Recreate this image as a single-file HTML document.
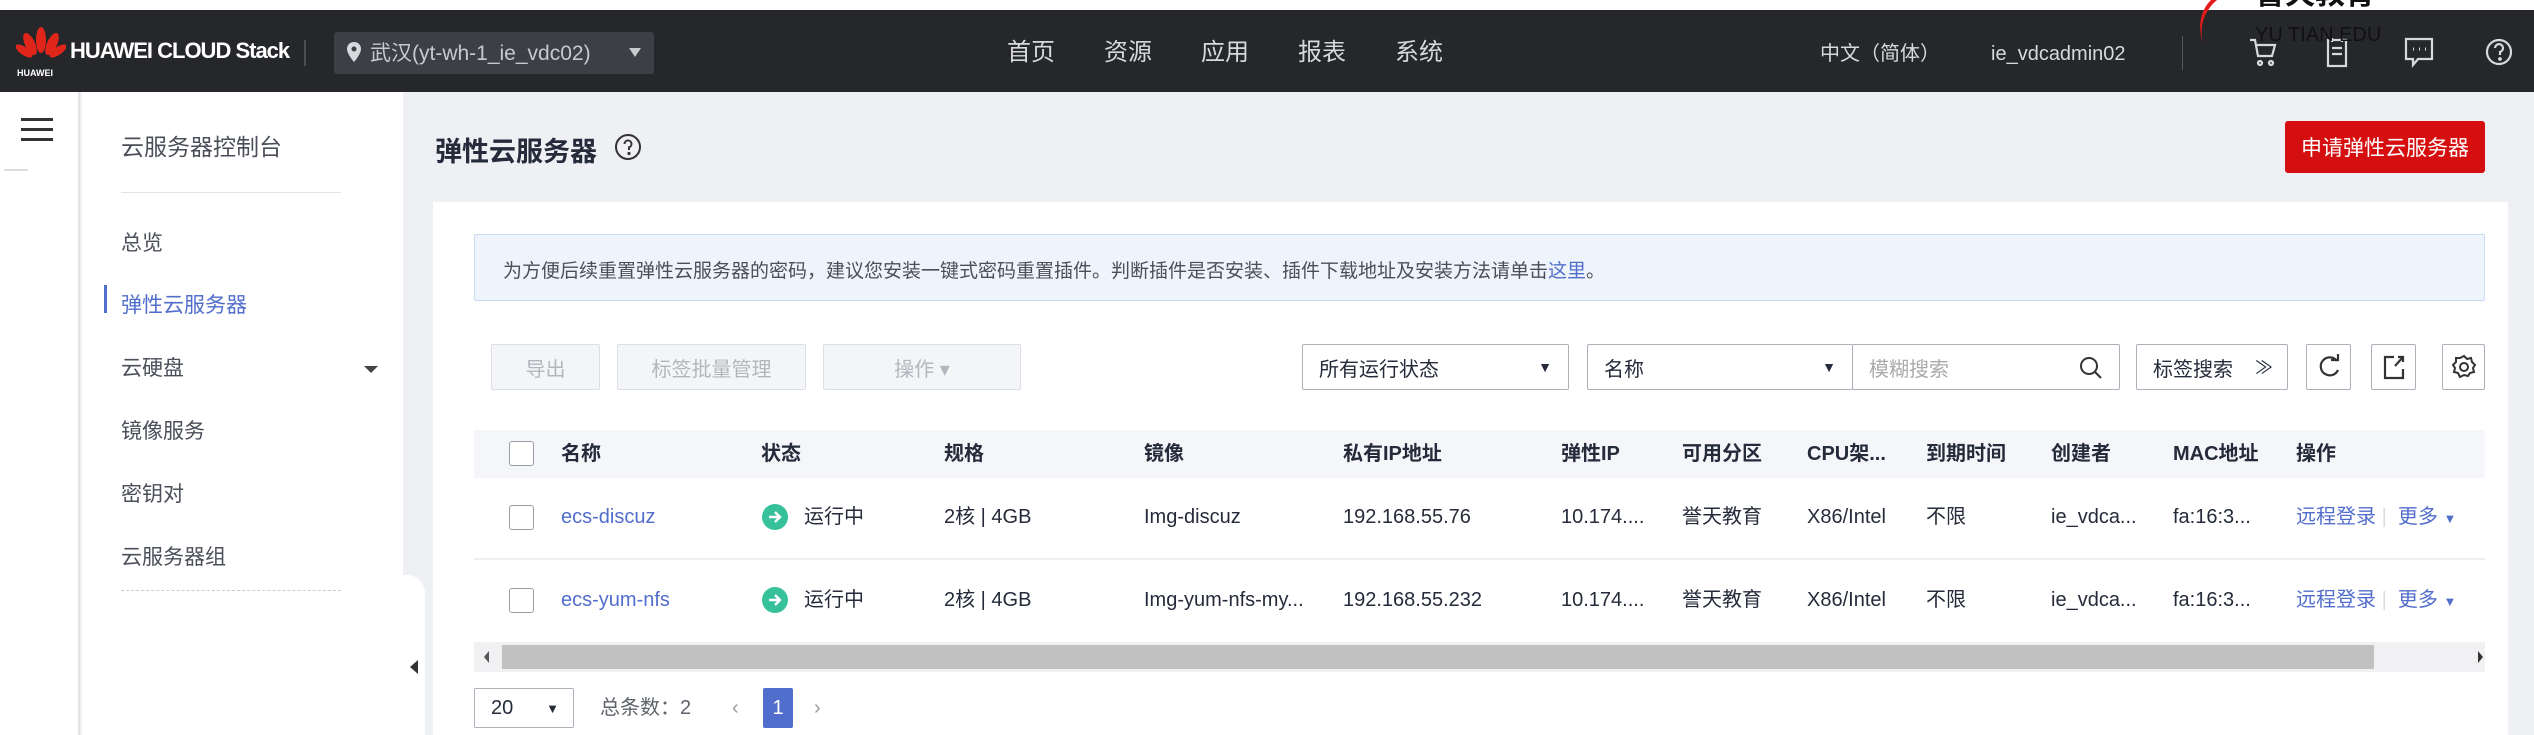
<!DOCTYPE html>
<html><head><meta charset="utf-8"><style>
*{margin:0;padding:0;box-sizing:border-box}
body{width:2534px;height:735px;overflow:hidden;background:#eff0f4;font-family:"Liberation Sans","Noto Sans CJK SC",sans-serif;color:#252b3a;position:relative}
.a{position:absolute;white-space:nowrap}
.hdr{left:0;top:10px;width:2534px;height:82px;background:#25272b}
.nav{color:#d8d9dc;font-size:24px;top:38px;line-height:30px}
.side{left:0;top:92px;width:80px;height:643px;background:#fff;border-right:2px solid #e3e4e8}
.menu{left:82px;top:92px;width:321px;height:643px;background:#fff}
.mi{font-size:21px;color:#4b4f59;left:121px;line-height:28px}
.card{left:433px;top:202px;width:2075px;height:533px;background:#fff}
.btn{border:1px solid #dcdfe6;background:#f4f5f7;color:#b3b6bd;font-size:20px;display:flex;align-items:center;justify-content:center;height:46px;top:344px;border-radius:2px}
.sel{border:1px solid #adb0b8;background:#fff;font-size:20px;color:#252b3a;height:46px;top:344px;display:flex;align-items:center;padding-left:16px;border-radius:2px}
.th{font-size:20px;font-weight:bold;color:#252b3a;top:440px;line-height:28px}
.td{font-size:20px;color:#252b3a;line-height:28px}
.td *{line-height:28px}
.lnk{color:#526ecc}
.cb{width:25px;height:25px;border:1.5px solid #9a9da4;border-radius:3px;background:#fff}
.ic{width:45px;height:46px;border:1px solid #adb0b8;top:344px;background:#fff;display:flex;align-items:center;justify-content:center;border-radius:2px}
</style></head><body>
<div class="a" style="left:0;top:0;width:2534px;height:10px;background:#fff"></div>
<div class="a hdr"></div>
<svg class="a" style="left:16px;top:26px" width="50" height="52" viewBox="0 0 50 52">
<g fill="#e0251b"><ellipse cx="25" cy="14" rx="5" ry="13"/><ellipse cx="14" cy="18" rx="5" ry="12" transform="rotate(-25 14 18)"/><ellipse cx="36" cy="18" rx="5" ry="12" transform="rotate(25 36 18)"/><ellipse cx="8" cy="25" rx="4" ry="10" transform="rotate(-55 8 25)"/><ellipse cx="42" cy="25" rx="4" ry="10" transform="rotate(55 42 25)"/></g>
<text x="1" y="50" fill="#fff" font-size="9" font-family="Liberation Sans" font-weight="bold">HUAWEI</text></svg>
<div class="a" style="left:70px;top:38px;color:#fff;font-size:22px;font-weight:bold;letter-spacing:-1px">HUAWEI CLOUD Stack</div>
<div class="a" style="left:304px;top:40px;width:2px;height:26px;background:#4a4c52"></div>
<div class="a" style="left:334px;top:32px;width:320px;height:42px;background:#3c3f45;border-radius:3px"></div>
<svg class="a" style="left:347px;top:42px" width="14" height="20" viewBox="0 0 14 20"><path d="M7 0C3 0 0 3 0 7c0 5 7 13 7 13s7-8 7-13c0-4-3-7-7-7z" fill="#d8d9dc"/><circle cx="7" cy="7" r="2.5" fill="#3c3f45"/></svg>
<div class="a" style="left:370px;top:40px;color:#c8c9cc;font-size:21px;line-height:28px">武汉(yt-wh-1_ie_vdc02)</div>
<div class="a" style="left:629px;top:48px;width:0;height:0;border-left:6px solid transparent;border-right:6px solid transparent;border-top:9px solid #c8c9cc"></div>
<div class="a nav" style="left:1007px">首页</div>
<div class="a nav" style="left:1104px">资源</div>
<div class="a nav" style="left:1201px">应用</div>
<div class="a nav" style="left:1298px">报表</div>
<div class="a nav" style="left:1395px">系统</div>
<div class="a" style="left:1820px;top:40px;color:#d8d9dc;font-size:20px;line-height:28px">中文（简体）</div>
<div class="a" style="left:1991px;top:40px;color:#d8d9dc;font-size:20px;line-height:28px">ie_vdcadmin02</div>
<div class="a" style="left:2182px;top:36px;width:1px;height:34px;background:#55585e"></div>
<svg class="a" style="left:2248px;top:36px" width="30" height="32" viewBox="0 0 30 32" fill="none" stroke="#d8d9dc" stroke-width="2.2"><path d="M2 4h5l3 16h14l3-11H9"/><circle cx="12" cy="27" r="2"/><circle cx="23" cy="27" r="2"/></svg>
<svg class="a" style="left:2326px;top:36px" width="22" height="32" viewBox="0 0 22 32" fill="none" stroke="#d8d9dc" stroke-width="2.2"><rect x="2" y="4" width="18" height="26"/><path d="M6 12h10M6 18h10M6 2v4M16 2v4"/></svg>
<svg class="a" style="left:2404px;top:36px" width="30" height="32" viewBox="0 0 30 32" fill="none" stroke="#d8d9dc" stroke-width="2.2"><path d="M2 3h26v20H14l-5 6v-6H2z"/><path d="M9 13h1M15 13h1M21 13h1" stroke-width="3"/></svg>
<svg class="a" style="left:2484px;top:36px" width="30" height="32" viewBox="0 0 30 32" fill="none" stroke="#d8d9dc" stroke-width="2.2"><circle cx="15" cy="16" r="12"/><path d="M11 12a4 4 0 1 1 5 4v3"/><circle cx="16" cy="23" r="0.8" fill="#d8d9dc"/></svg>
<div class="a" style="left:2255px;top:-22px;font-size:30px;font-weight:bold;color:#111;line-height:34px">誉天教育</div>
<div class="a" style="left:2255px;top:24px;font-size:20px;color:#111;line-height:22px">YU TIAN EDU</div>
<svg class="a" style="left:2183px;top:0" width="40" height="50" viewBox="0 0 40 50"><path d="M28 0C18 10 14 25 20 44C16 28 20 12 34 0z" fill="#e31b1b"/></svg>
<div class="a side"></div>
<div class="a" style="left:21px;top:118px;width:32px;height:3px;background:#333"></div>
<div class="a" style="left:21px;top:128px;width:32px;height:3px;background:#333"></div>
<div class="a" style="left:21px;top:138px;width:32px;height:3px;background:#333"></div>
<div class="a" style="left:4px;top:169px;width:24px;height:2px;background:#ddd"></div>
<div class="a menu"></div>
<div class="a" style="left:82px;top:575px;width:343px;height:160px;background:#fff;border-radius:0 18px 0 0"></div>
<div class="a" style="left:410px;top:660px;width:0;height:0;border-top:7px solid transparent;border-bottom:7px solid transparent;border-right:8px solid #333"></div>
<div class="a mi" style="top:133px;font-size:23px">云服务器控制台</div>
<div class="a" style="left:121px;top:192px;width:220px;height:1px;background:#e2e3e6"></div>
<div class="a mi" style="top:230px">总览</div>
<div class="a" style="left:104px;top:285px;width:3px;height:28px;background:#526ecc"></div>
<div class="a mi" style="top:292px;color:#526ecc">弹性云服务器</div>
<div class="a mi" style="top:355px">云硬盘</div>
<div class="a" style="left:364px;top:366px;border-left:7px solid transparent;border-right:7px solid transparent;border-top:7px solid #444"></div>
<div class="a mi" style="top:418px">镜像服务</div>
<div class="a mi" style="top:481px">密钥对</div>
<div class="a mi" style="top:544px">云服务器组</div>
<div class="a" style="left:121px;top:590px;width:220px;border-top:1px dashed #ccc"></div>
<div class="a" style="left:435px;top:130px;font-size:27px;font-weight:bold">弹性云服务器</div>
<svg class="a" style="left:614px;top:133px" width="28" height="28" viewBox="0 0 28 28" fill="none" stroke="#333" stroke-width="2"><circle cx="14" cy="14" r="12"/><path d="M10.5 11a3.5 3.5 0 1 1 4.5 3.3V17"/><circle cx="15" cy="20.5" r="0.6" fill="#333"/></svg>
<div class="a" style="left:2285px;top:121px;width:200px;height:52px;background:#d50f0f;border-radius:3px;color:#fff;font-size:21px;display:flex;align-items:center;justify-content:center">申请弹性云服务器</div>
<div class="a card"></div>
<div class="a" style="left:474px;top:234px;width:2011px;height:67px;background:#eef4fb;border:1px solid #c9dcf2;border-radius:2px"></div>
<div class="a" style="left:503px;top:256px;font-size:19px;color:#4b4f59">为方便后续重置弹性云服务器的密码，建议您安装一键式密码重置插件。判断插件是否安装、插件下载地址及安装方法请单击<span class="lnk">这里</span>。</div>
<div class="a btn" style="left:491px;width:109px">导出</div>
<div class="a btn" style="left:617px;width:189px">标签批量管理</div>
<div class="a btn" style="left:823px;width:198px">操作 ▾</div>
<div class="a sel" style="left:1302px;width:267px">所有运行状态<span style="position:absolute;right:16px;font-size:14px">▼</span></div>
<div class="a sel" style="left:1587px;width:266px">名称<span style="position:absolute;right:16px;font-size:14px">▼</span></div>
<div class="a sel" style="left:1852px;width:268px;color:#aaa">模糊搜索
<svg style="position:absolute;right:16px;top:11px" width="24" height="24" viewBox="0 0 24 24" fill="none" stroke="#333" stroke-width="2"><circle cx="10" cy="10" r="8"/><path d="M16 16l6 6"/></svg></div>
<div class="a sel" style="left:2136px;width:152px">标签搜索<span style="position:absolute;right:14px;font-size:18px">≫</span></div>
<div class="a ic" style="left:2306px"><svg width="24" height="26" viewBox="0 0 24 26" fill="none" stroke="#333" stroke-width="2.2"><path d="M20 7A9 9 0 1 0 21 16"/><path d="M14 6h7V0"/></svg></div>
<div class="a ic" style="left:2371px"><svg width="22" height="26" viewBox="0 0 22 26" fill="none" stroke="#333" stroke-width="2.2"><path d="M11 3H2v21h18v-9"/><path d="M12 12l8-9M15 3h5v5"/></svg></div>
<div class="a ic" style="left:2442px;width:43px"><svg width="26" height="26" viewBox="0 0 26 26" fill="none" stroke="#333" stroke-width="2"><circle cx="13" cy="13" r="4"/><path d="M13 2l3 3 4-1 1 4 3 3-2 3 1 4-4 1-2 3-4-1-4 2-2-4-4-1 1-4-2-3 3-3 0-4 4 0z"/></svg></div>
<div class="a" style="left:474px;top:430px;width:2011px;height:48px;background:#f4f6fa"></div>
<div class="a cb" style="left:509px;top:441px"></div>
<div class="a th" style="left:561px">名称</div>
<div class="a th" style="left:761px">状态</div>
<div class="a th" style="left:944px">规格</div>
<div class="a th" style="left:1144px">镜像</div>
<div class="a th" style="left:1343px">私有IP地址</div>
<div class="a th" style="left:1561px">弹性IP</div>
<div class="a th" style="left:1682px">可用分区</div>
<div class="a th" style="left:1807px">CPU架...</div>
<div class="a th" style="left:1926px">到期时间</div>
<div class="a th" style="left:2051px">创建者</div>
<div class="a th" style="left:2173px">MAC地址</div>
<div class="a th" style="left:2296px">操作</div>
<div class="a" style="left:474px;top:558px;width:2011px;height:2px;background:#eceef1"></div>
<div class="a" style="left:474px;top:642px;width:2011px;height:30px;background:#f1f1f3"></div>
<div class="a" style="left:502px;top:645px;width:1872px;height:24px;background:#c1c1c1"></div>
<div class="a" style="left:484px;top:651px;border-top:6px solid transparent;border-bottom:6px solid transparent;border-right:5px solid #555"></div>
<div class="a" style="left:2478px;top:651px;border-top:6px solid transparent;border-bottom:6px solid transparent;border-left:5px solid #333"></div>
<div class="a cb" style="left:509px;top:505px"></div>
<div class="a td lnk" style="left:561px;top:503px">ecs-discuz</div>
<svg class="a" style="left:761px;top:503px" width="28" height="28" viewBox="0 0 28 28"><circle cx="14" cy="14" r="13" fill="#37c19b"/><path d="M8 14h11M14 9l5 5-5 5" fill="none" stroke="#fff" stroke-width="2.4"/></svg>
<div class="a td" style="left:804px;top:503px">运行中</div>
<div class="a td" style="left:944px;top:503px">2核 | 4GB</div>
<div class="a td" style="left:1144px;top:503px">Img-discuz</div>
<div class="a td" style="left:1343px;top:503px">192.168.55.76</div>
<div class="a td" style="left:1561px;top:503px">10.174....</div>
<div class="a td" style="left:1682px;top:503px">誉天教育</div>
<div class="a td" style="left:1807px;top:503px">X86/Intel</div>
<div class="a td" style="left:1926px;top:503px">不限</div>
<div class="a td" style="left:2051px;top:503px">ie_vdca...</div>
<div class="a td" style="left:2173px;top:503px">fa:16:3...</div>
<div class="a td lnk" style="left:2296px;top:503px">远程登录 <span style="color:#ddd">|</span>&nbsp; 更多 <span style="font-size:13px">▼</span></div>
<div class="a cb" style="left:509px;top:588px"></div>
<div class="a td lnk" style="left:561px;top:586px">ecs-yum-nfs</div>
<svg class="a" style="left:761px;top:586px" width="28" height="28" viewBox="0 0 28 28"><circle cx="14" cy="14" r="13" fill="#37c19b"/><path d="M8 14h11M14 9l5 5-5 5" fill="none" stroke="#fff" stroke-width="2.4"/></svg>
<div class="a td" style="left:804px;top:586px">运行中</div>
<div class="a td" style="left:944px;top:586px">2核 | 4GB</div>
<div class="a td" style="left:1144px;top:586px">Img-yum-nfs-my...</div>
<div class="a td" style="left:1343px;top:586px">192.168.55.232</div>
<div class="a td" style="left:1561px;top:586px">10.174....</div>
<div class="a td" style="left:1682px;top:586px">誉天教育</div>
<div class="a td" style="left:1807px;top:586px">X86/Intel</div>
<div class="a td" style="left:1926px;top:586px">不限</div>
<div class="a td" style="left:2051px;top:586px">ie_vdca...</div>
<div class="a td" style="left:2173px;top:586px">fa:16:3...</div>
<div class="a td lnk" style="left:2296px;top:586px">远程登录 <span style="color:#ddd">|</span>&nbsp; 更多 <span style="font-size:13px">▼</span></div>
<div class="a sel" style="left:474px;top:688px;width:100px;height:40px">20<span style="position:absolute;right:14px;font-size:13px">▼</span></div>
<div class="a td" style="left:600px;top:694px;color:#5f636b">总条数：2</div>
<div class="a td" style="left:732px;top:694px;color:#999">‹</div>
<div class="a" style="left:763px;top:688px;width:30px;height:40px;background:#526ecc;color:#fff;font-size:20px;display:flex;align-items:center;justify-content:center;border-radius:2px">1</div>
<div class="a td" style="left:814px;top:694px;color:#999">›</div>
</body></html>
